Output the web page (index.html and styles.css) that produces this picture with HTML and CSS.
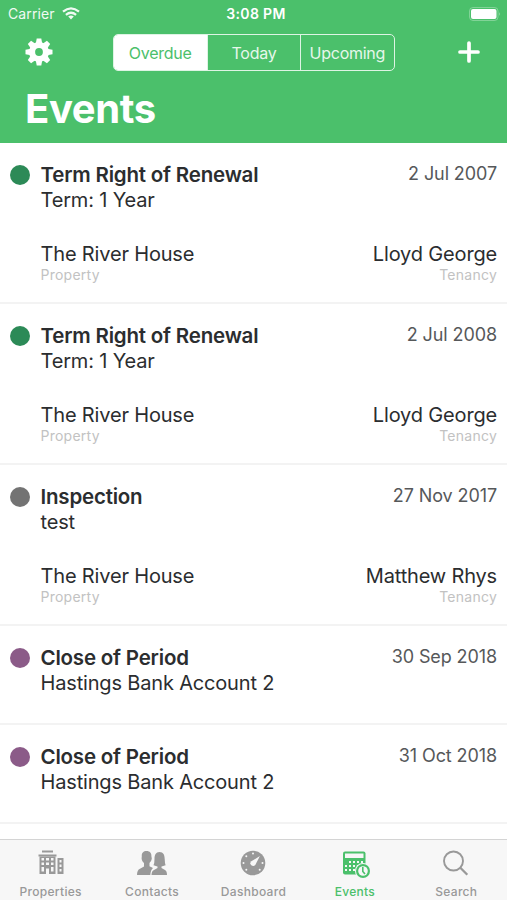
FILE: index.html
```html
<!DOCTYPE html>
<html lang="en">
<head>
<meta charset="utf-8">
<title>Events</title>
<link rel="stylesheet" href="styles.css">
</head>
<body>
<div class="app">
  <header class="header">
    <div class="status">
      <div class="carrier"><span>Carrier</span>
        <svg width="18" height="13" viewBox="0 0 18 13" fill="none" stroke="#fff" stroke-width="2.2"><path d="M1 4.7Q9-2 17 4.7M3.9 7.8Q9 3.7 14.1 7.8"/><path d="M6.2 9.6Q9 7.2 11.800 9.600L9 12.500Z" fill="#fff" stroke="none"/></svg>
      </div>
      <span class="time">3:08 PM</span>
      <svg class="battery" width="32" height="14" viewBox="0 0 32 14"><rect x=".5" y=".5" width="28.5" height="13" rx="3.5" fill="none" stroke="#fff" stroke-opacity=".3"/><rect x="2" y="2" width="25.5" height="10" rx="2" fill="#fff"/><path d="M30.3 5q1.6 2 0 4z" fill="#fff" fill-opacity=".5"/></svg>
    </div>
    <nav class="toolbar">
      <svg class="gear" width="28" height="28" viewBox="-14 -14 28 28"><g fill="#fff"><path id="tooth" d="M-3.300-8L-2.300-13.500H2.300L3.300-8V8L2.300 13.500H-2.300L-3.300 8Z"/><use href="#tooth" transform="rotate(45)"/><use href="#tooth" transform="rotate(90)"/><use href="#tooth" transform="rotate(135)"/><circle r="10"/></g><circle r="3.900" fill="#4bc06b"/></svg>
      <div class="segments"><span class="segment selected">Overdue</span><span class="segment">Today</span><span class="segment">Upcoming</span></div>
      <svg class="plus" width="22" height="22" viewBox="0 0 22 22" stroke="#fff" stroke-width="3.700" stroke-linecap="round"><path d="M11 2v18M2 11h18"/></svg>
    </nav>
    <h1>Events</h1>
  </header>
  <main class="list">
    <article class="event">
      <i class="dot green"></i>
      <div class="body">
        <div class="line"><h2>Term Right of Renewal</h2><time>2 Jul 2007</time></div>
        <p class="note">Term: 1 Year</p>
        <div class="line refs"><div><p class="name">The River House</p><p class="kind">Property</p></div><div class="right"><p class="name">Lloyd George</p><p class="kind">Tenancy</p></div></div>
      </div>
    </article>
    <article class="event">
      <i class="dot green"></i>
      <div class="body">
        <div class="line"><h2>Term Right of Renewal</h2><time>2 Jul 2008</time></div>
        <p class="note">Term: 1 Year</p>
        <div class="line refs"><div><p class="name">The River House</p><p class="kind">Property</p></div><div class="right"><p class="name">Lloyd George</p><p class="kind">Tenancy</p></div></div>
      </div>
    </article>
    <article class="event">
      <i class="dot gray"></i>
      <div class="body">
        <div class="line"><h2>Inspection</h2><time>27 Nov 2017</time></div>
        <p class="note">test</p>
        <div class="line refs"><div><p class="name">The River House</p><p class="kind">Property</p></div><div class="right"><p class="name">Matthew Rhys</p><p class="kind">Tenancy</p></div></div>
      </div>
    </article>
    <article class="event short">
      <i class="dot purple"></i>
      <div class="body">
        <div class="line"><h2>Close of Period</h2><time>30 Sep 2018</time></div>
        <p class="note">Hastings Bank Account 2</p>
      </div>
    </article>
    <article class="event short">
      <i class="dot purple"></i>
      <div class="body">
        <div class="line"><h2>Close of Period</h2><time>31 Oct 2018</time></div>
        <p class="note">Hastings Bank Account 2</p>
      </div>
    </article>
  </main>
  <nav class="tabs">
    <div class="tab">
      <svg width="32" height="32" viewBox="0 0 32 32" fill="currentColor"><path d="M7 2.500h11v2H7zM3.500 6.500h18v2H3.500z"/><path fill-rule="evenodd" d="M4.500 8.500h16V26h-16zM6.500 10v2.500H9V10zM11 10v2.500h3V10zM16 10v2.500h2.500V10zM6.500 14.500V17H9v-2.500zM11 14.500V17h3v-2.500zM16 14.500V17h2.500v-2.500zM6.500 19v4.500H9V19zM11 20.500V26h3v-5.500zM16 19v4.500h2.500V19z"/><path fill-rule="evenodd" d="M22.500 10H28.500v16h-6zM24.500 12v2.500h2V12zM24.500 16.500V19h2v-2.500zM24.500 21v2.500h2V21z"/></svg>
      <span>Properties</span>
    </div>
    <div class="tab">
      <svg width="32" height="32" viewBox="0 0 32 32" fill="currentColor"><path d="M10.500 3C14 3 15.600 5.200 15.400 8.200L15.800 10.500C15.500 13 14.500 13.500 13.500 15V18.200L17 20Q14.600 22 14.300 27H1Q1 22 4 20.800L8 18.500V15C6.500 13.500 5.800 12.500 5.600 10.500L5.800 8C5.500 5 7.500 3 10.500 3Z"/><path d="M23.500 4C27.500 4 28.600 7 28.700 11Q28.800 15 29.600 17.300L25.500 18.500V20L29 22Q31 23 31 27H15.500Q15.500 23 18 22L21.500 20V18.500L17.500 17.300Q18.500 15 18.500 11C18.500 7 19.800 4 23.500 4Z"/></svg>
      <span>Contacts</span>
    </div>
    <div class="tab">
      <svg width="32" height="32" viewBox="0 0 32 32"><circle cx="16" cy="15" r="12.300" fill="currentColor"/><g fill="#f7f7f7"><circle cx="16" cy="5.500" r="1"/><circle cx="9.300" cy="8.300" r="1"/><circle cx="6.500" cy="15" r="1"/><circle cx="9.300" cy="21.700" r="1"/><circle cx="22.700" cy="21.700" r="1"/><circle cx="25.500" cy="15" r="1"/><path d="M22.900 8.100L18.300 17Q16.500 19 14.300 17.300Q12.400 15 14.300 13.300Z"/></g></svg>
      <span>Dashboard</span>
    </div>
    <div class="tab active">
      <svg width="32" height="32" viewBox="0 0 32 32"><rect x="4" y="3.500" width="22.500" height="23" rx="2" fill="currentColor"/><path d="M6 5.500h18.500v4.500H6z" fill="#f7f7f7"/><path d="M10 14h15M6 18h18M6 22h11" stroke="#f7f7f7" stroke-width="2" stroke-dasharray="2 2"/><circle cx="24" cy="23" r="8" fill="#f7f7f7"/><circle cx="24" cy="23" r="7" fill="currentColor"/><circle cx="24" cy="23" r="4.800" fill="#f7f7f7"/><path d="M23.800 19v4.500l2.200 2.500" fill="none" stroke="currentColor" stroke-width="1.600"/></svg>
      <span>Events</span>
    </div>
    <div class="tab">
      <svg width="32" height="32" viewBox="0 0 32 32" fill="none" stroke="currentColor" stroke-width="1.900"><circle cx="13.500" cy="13" r="9.500"/><path d="M20.300 19.800l7 7" stroke-width="2.300"/></svg>
      <span>Search</span>
    </div>
  </nav>
</div>
</body>
</html>
```
FILE: styles.css
```css
* { box-sizing: border-box; }
body { margin: 0; font-family: Inter, "Liberation Sans", sans-serif; background: #fff; color: #2b2d2f; }
h1, h2, p { margin: 0; }
svg { display: block; }
.app { width: 507px; height: 900px; display: flex; flex-direction: column; overflow: hidden; }
.header { height: 143px; flex: none; background: #4bc06b; color: #fff; }
.status { height: 27px; padding: 0 6px 0 8px; display: grid; grid-template-columns: 1fr auto 1fr; align-items: center; font-size: 14px; }
.carrier { display: flex; align-items: center; gap: 7px; letter-spacing: .1px; opacity: .92; }
.time { font-weight: 600; font-size: 14px; letter-spacing: .35px; padding-left: 3px; }
.battery { justify-self: end; }
.toolbar { height: 50px; padding: 0 27px 0 25px; display: flex; align-items: center; justify-content: space-between; }
.segments { width: 282px; height: 37px; margin-left: -4px; display: grid; grid-template-columns: repeat(3, 1fr); border: 1px solid #def4e4; border-radius: 5px; overflow: hidden; }
.segment { display: flex; align-items: center; justify-content: center; font-size: 16px; letter-spacing: -.25px; padding-top: 1px; color: #e6f7ea; }
.segment + .segment { border-left: 1px solid #def4e4; }
.segment.selected { background: #fff; color: #4bc06b; }
h1 { padding-left: 25px; font-size: 40px; line-height: 64px; font-weight: 700; letter-spacing: -.4px; }
.list { flex: 1; min-height: 0; overflow: hidden; }
.event { height: 161px; padding: 19px 10px 0; display: flex; gap: 10.500px; border-bottom: 2px solid #f3f3f3; }
.event.short { height: 99px; }
.dot { width: 20px; height: 20px; margin-top: 3px; border-radius: 50%; flex: none; }
.green { background: #2c8a57; }
.gray { background: #737373; }
.purple { background: #8b5b88; }
.body { flex: 1; }
.line { display: flex; justify-content: space-between; }
h2 { font-size: 20.500px; line-height: 26px; font-weight: 600; letter-spacing: -.2px; }
time { font-size: 18px; line-height: 23px; letter-spacing: -.1px; color: #56585a; }
.note, .name { font-size: 20px; line-height: 25px; letter-spacing: -.17px; }
.refs { margin-top: 29px; }
.right { text-align: right; }
.kind { font-size: 14px; line-height: 16px; letter-spacing: .25px; color: #c2c2c2; }
.tabs { height: 61px; flex: none; display: grid; grid-template-columns: repeat(5, 1fr); background: #f7f7f7; border-top: 1px solid #d4d4d4; }
.tab { padding-top: 8px; display: flex; flex-direction: column; align-items: center; color: #999; font-size: 12px; line-height: 16px; font-weight: 500; letter-spacing: .3px; }
.tab span { margin-top: 4px; }
.tab.active { color: #4bc06b; }
```
